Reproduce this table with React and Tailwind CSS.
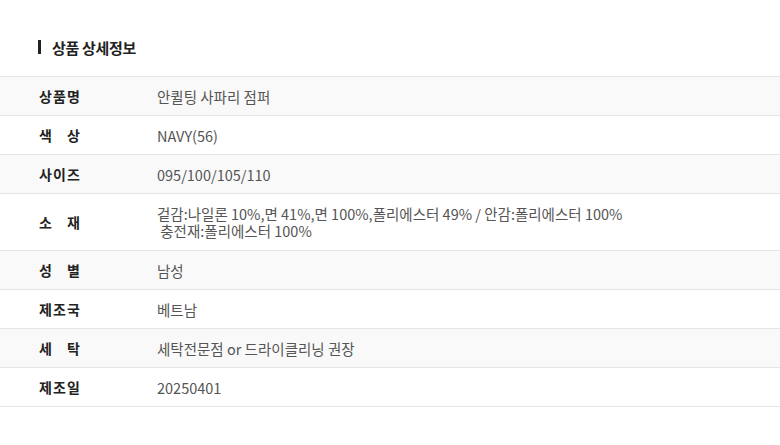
const rows = [
  { label: ['상', '품', '명'], value: '안퀼팅 사파리 점퍼' },
  { label: ['색', '상'], value: 'NAVY(56)' },
  { label: ['사', '이', '즈'], value: '095/100/105/110' },
  { label: ['소', '재'], value: '겉감:나일론 10%,면 41%,면 100%,폴리에스터 49% / 안감:폴리에스터 100%\n 충전재:폴리에스터 100%', tall: true },
  { label: ['성', '별'], value: '남성' },
  { label: ['제', '조', '국'], value: '베트남' },
  { label: ['세', '탁'], value: '세탁전문점 or 드라이클리닝 권장' },
  { label: ['제', '조', '일'], value: '20250401' },
];

export default function App() {
  return (
    <div className="w-[780px] h-[445px] bg-white font-['Noto_Sans_CJK_KR','Noto_Sans',sans-serif] pt-[38px]">
      {/* 제목 */}
      <div className="flex items-center gap-[11px] pl-[38px] h-[18px]">
        <span className="w-[3px] h-[14px] bg-[#222]" />
        <h2 className="text-[15px] font-bold text-[#222] leading-none tracking-[-0.3px]">상품 상세정보</h2>
      </div>

      <div className="mt-[20px] border-t border-[#e5e5e5]">
        {rows.map((r, i) => (
          <div
            key={i}
            className={`flex items-center border-b border-[#e5e5e5] ${r.tall ? 'h-[57px]' : 'h-[39px]'} ${i % 2 === 0 ? 'bg-[#f9f9f9]' : 'bg-white'}`}
          >
            <div className="w-[157px] pl-[39px] shrink-0">
              <span className="flex justify-between w-[41px] text-[14px] font-bold text-[#222] leading-none">
                {r.label.map((c, j) => <span key={j}>{c}</span>)}
              </span>
            </div>
            <div className="text-[14.5px] text-[#555] leading-[17px] whitespace-pre">
              {r.value}
            </div>
          </div>
        ))}
      </div>
    </div>
  );
}
